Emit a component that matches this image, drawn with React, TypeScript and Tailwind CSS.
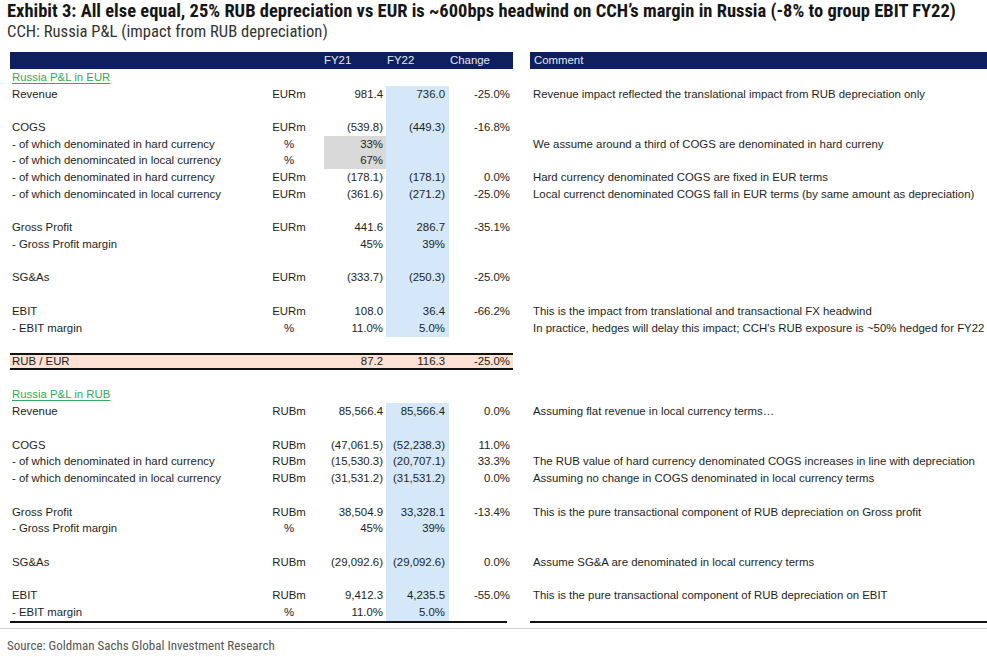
type Row = {
  kind?: 'section' | 'rate' | 'blank';
  label?: string;
  unit?: string;
  a?: string;
  b?: string;
  c?: string;
  comment?: string;
  gray?: boolean;
  blue?: boolean;
};

const rows: Row[] = [
  { kind: 'section', label: 'Russia P&L in EUR' },
  { label: 'Revenue', unit: 'EURm', a: '981.4', b: '736.0', c: '-25.0%', comment: 'Revenue impact reflected the translational impact from RUB depreciation only' },
  { kind: 'blank', blue: true },
  { label: 'COGS', unit: 'EURm', a: '(539.8)', b: '(449.3)', c: '-16.8%' },
  { label: '- of which denominated in hard currency', unit: '%', a: '33%', gray: true, comment: 'We assume around a third of COGS are denominated in hard curreny' },
  { label: '- of which denomincated in local currency', unit: '%', a: '67%', gray: true },
  { label: '- of which denominated in hard currency', unit: 'EURm', a: '(178.1)', b: '(178.1)', c: '0.0%', comment: 'Hard currency denominated COGS are fixed in EUR terms' },
  { label: '- of which denomincated in local currency', unit: 'EURm', a: '(361.6)', b: '(271.2)', c: '-25.0%', comment: 'Local currenct denominated COGS fall in EUR terms (by same amount as depreciation)' },
  { kind: 'blank', blue: true },
  { label: 'Gross Profit', unit: 'EURm', a: '441.6', b: '286.7', c: '-35.1%' },
  { label: '- Gross Profit margin', a: '45%', b: '39%' },
  { kind: 'blank', blue: true },
  { label: 'SG&As', unit: 'EURm', a: '(333.7)', b: '(250.3)', c: '-25.0%' },
  { kind: 'blank', blue: true },
  { label: 'EBIT', unit: 'EURm', a: '108.0', b: '36.4', c: '-66.2%', comment: 'This is the impact from translational and transactional FX headwind' },
  { label: '- EBIT margin', unit: '%', a: '11.0%', b: '5.0%', comment: "In practice, hedges will delay this impact; CCH's RUB exposure is ~50% hedged for FY22" },
  { kind: 'blank' },
  { kind: 'rate', label: 'RUB / EUR', a: '87.2', b: '116.3', c: '-25.0%' },
  { kind: 'blank' },
  { kind: 'section', label: 'Russia P&L in RUB' },
  { label: 'Revenue', unit: 'RUBm', a: '85,566.4', b: '85,566.4', c: '0.0%', comment: 'Assuming flat revenue in local currency terms…' },
  { kind: 'blank', blue: true },
  { label: 'COGS', unit: 'RUBm', a: '(47,061.5)', b: '(52,238.3)', c: '11.0%' },
  { label: '- of which denominated in hard currency', unit: 'RUBm', a: '(15,530.3)', b: '(20,707.1)', c: '33.3%', comment: 'The RUB value of hard currency denominated COGS increases in line with depreciation' },
  { label: '- of which denomincated in local currency', unit: 'RUBm', a: '(31,531.2)', b: '(31,531.2)', c: '0.0%', comment: 'Assuming no change in COGS denominated in local currency terms' },
  { kind: 'blank', blue: true },
  { label: 'Gross Profit', unit: 'RUBm', a: '38,504.9', b: '33,328.1', c: '-13.4%', comment: 'This is the pure transactional component of RUB depreciation on Gross profit' },
  { label: '- Gross Profit margin', unit: '%', a: '45%', b: '39%' },
  { kind: 'blank', blue: true },
  { label: 'SG&As', unit: 'RUBm', a: '(29,092.6)', b: '(29,092.6)', c: '0.0%', comment: 'Assume SG&A are denominated in local currency terms' },
  { kind: 'blank', blue: true },
  { label: 'EBIT', unit: 'RUBm', a: '9,412.3', b: '4,235.5', c: '-55.0%', comment: 'This is the pure transactional component of RUB depreciation on EBIT' },
  { label: '- EBIT margin', unit: '%', a: '11.0%', b: '5.0%' },
];

function TableRow({ row }: { row: Row }) {
  if (row.kind === 'section') {
    return (
      <div className="flex h-[16.72px] items-center pl-[12px]">
        <span className="text-[#2eac5c] underline underline-offset-[2px]">{row.label}</span>
      </div>
    );
  }

  if (row.kind === 'blank') {
    return (
      <div className="flex h-[16.72px]">
        <div className="w-[386px]" />
        {row.blue && <div className="w-[63px] bg-[#d5e8fa]" />}
      </div>
    );
  }

  const rate = row.kind === 'rate';

  return (
    <div className="flex h-[16.72px]">
      <div
        className={
          rate
            ? 'ml-[10px] flex w-[503px] items-center border-y-2 border-[#111] bg-[#fbe2d4]'
            : 'ml-[10px] flex w-[503px] items-center'
        }
      >
        <div className="w-[252px] pl-[2px] whitespace-nowrap">{row.label}</div>
        <div className="w-[54px] text-center">{row.unit}</div>
        <div className="w-[8px]" />
        <div className={row.gray ? 'flex h-full w-[62px] items-center justify-end bg-[#d9d9d9] pr-[3px]' : 'flex h-full w-[62px] items-center justify-end pr-[3px]'}>
          {row.a}
        </div>
        <div className={rate ? 'flex h-full w-[63px] items-center justify-end pr-[4px]' : 'flex h-full w-[63px] items-center justify-end bg-[#d5e8fa] pr-[4px]'}>
          {row.b}
        </div>
        <div className="w-[64px] pr-[3px] text-right">{row.c}</div>
      </div>
      <div className="flex items-center pl-[20px] whitespace-nowrap">{row.comment}</div>
    </div>
  );
}

export default function App() {
  const narrow = "font-['Liberation_Sans_Narrow','Arial_Narrow','Roboto_Condensed','DejaVu_Sans_Condensed',sans-serif]";

  return (
    <div className="h-[657px] w-[987px] overflow-hidden bg-white font-['Liberation_Sans',Arial,sans-serif] text-[11.4px] text-[#1e1e1e]">
      <div className={`${narrow} h-[22px] pl-[7px] text-[18.5px] leading-[22px] font-bold whitespace-nowrap text-[#161616]`}>
        Exhibit 3: All else equal, 25% RUB depreciation vs EUR is ~600bps headwind on CCH’s margin in Russia (-8% to group EBIT FY22)
      </div>
      <div className={`${narrow} h-[20px] pl-[7px] text-[16.6px] leading-[20px] text-[#333]`}>
        CCH: Russia P&amp;L (impact from RUB depreciation)
      </div>

      {/* header bar */}
      <div className="mt-[10px] flex h-[17px] text-[#e8e9f0]">
        <div className="ml-[10px] flex w-[503px] items-center bg-[#0d1f5c]">
          <div className="w-[314px]" />
          <div className="w-[63px]">FY21</div>
          <div className="w-[63px]">FY22</div>
          <div>Change</div>
        </div>
        <div className="ml-[17px] flex flex-1 items-center bg-[#0d1f5c] pl-[4px]">Comment</div>
      </div>

      {rows.map((row, i) => (
        <TableRow key={i} row={row} />
      ))}

      {/* closing rules */}
      <div className="flex h-[2px]">
        <div className="ml-[10px] w-[497px] bg-[#111]" />
        <div className="ml-[23px] flex-1 bg-[#111]" />
      </div>
      <div className="mt-[5px] h-px bg-[#cfcfcf]" />
      <div className={`${narrow} pt-[7px] pl-[7px] text-[13px] text-[#555]`}>
        Source: Goldman Sachs Global Investment Research
      </div>
    </div>
  );
}
